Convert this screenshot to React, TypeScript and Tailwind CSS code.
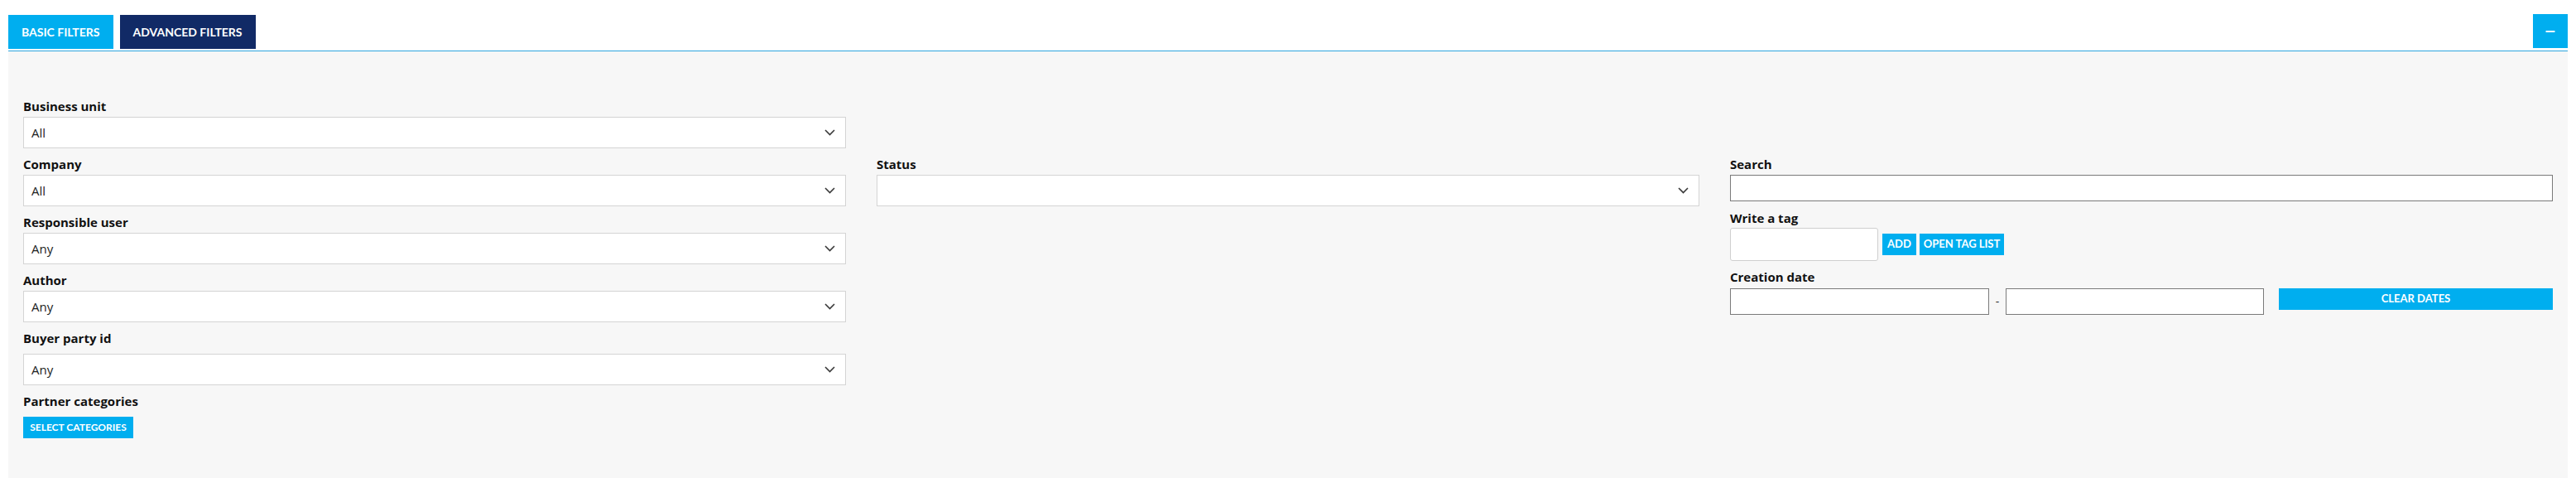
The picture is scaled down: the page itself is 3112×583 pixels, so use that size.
import { Minus } from "lucide-react"

const label = "block h-[20px] leading-[20px] text-[15px] font-bold text-[#111] font-['Open_Sans',sans-serif]"
const btn = "bg-[#00aeef] text-white font-bold uppercase font-['Lato',sans-serif] flex items-center justify-center"

function Chevron() {
  return (
    <svg width="13" height="8" viewBox="0 0 13 8" fill="none">
      <polyline points="1,1 6.5,6.5 12,1" stroke="#3a3a3a" strokeWidth="1.6" />
    </svg>
  )
}

function SelectBox({ value }: { value?: string }) {
  return (
    <div className="h-[38px] bg-white border border-[#d4d4d4] flex items-center justify-between pl-[9px] pr-[12px]">
      <span className="text-[15px] text-[#222] font-['Open_Sans',sans-serif]">{value}</span>
      <Chevron />
    </div>
  )
}

function Field({ name, value, extra }: { name: string; value?: string; extra?: boolean }) {
  return (
    <div className="mb-[9px]">
      <span className={`${label} ${extra ? "mb-[9px]" : "mb-[3px]"}`}>{name}</span>
      <SelectBox value={value} />
    </div>
  )
}

export default function App() {
  return (
    <div className="w-[3112px] h-[583px] bg-white">
      <div className="flex items-end justify-between px-[10px] pt-[17px]">
        <div className="flex gap-[8px]">
          <button className={`${btn} h-[41px] px-[16px] text-[14px]`}>Basic filters</button>
          <button className="h-[41px] px-[16px] text-[14px] bg-[#112a66] text-white font-bold uppercase font-['Lato',sans-serif]">Advanced filters</button>
        </div>
        <button className="w-[42px] h-[41px] mb-[1px] bg-[#00aeef] flex items-center justify-center text-white">
          <Minus size={16} strokeWidth={3} />
        </button>
      </div>
      <div className="mx-[10px] mt-[2px] border-t border-[#2ea6df] bg-[#f7f7f7] h-[516px] px-[18px] pt-[56px] grid grid-cols-3 gap-x-[37px] items-start">
        <div>
          <Field name="Business unit" value="All" />
          <Field name="Company" value="All" />
          <Field name="Responsible user" value="Any" />
          <Field name="Author" value="Any" />
          <Field name="Buyer party id" value="Any" extra />
          <span className={`${label} mb-[9px]`}>Partner categories</span>
          <button className={`${btn} w-[133px] h-[26px] text-[12px]`}>Select categories</button>
        </div>
        <div className="pt-[70px]">
          <Field name="Status" />
        </div>
        <div className="pt-[70px] font-['Open_Sans',sans-serif]">
          <span className={`${label} mb-[3px]`}>Search</span>
          <input className="block w-full h-[32px] bg-white border border-[#7a7a7a] outline-none" />
          <span className={`${label} mt-[10px] mb-[2px]`}>Write a tag</span>
          <div className="flex items-center">
            <input className="w-[179px] h-[40px] bg-white border border-[#cfcfcf] rounded-[3px] outline-none" />
            <button className={`${btn} ml-[5px] w-[41px] h-[26px] text-[13px]`}>Add</button>
            <button className={`${btn} ml-[4px] w-[102px] h-[26px] text-[13px]`}>Open tag list</button>
          </div>
          <span className={`${label} mt-[9px] mb-[4px]`}>Creation date</span>
          <div className="flex items-start">
            <input className="w-[313px] h-[32px] bg-white border border-[#7a7a7a] outline-none" />
            <span className="w-[20px] h-[32px] leading-[32px] text-center text-[14px] text-[#333]">-</span>
            <input className="w-[312px] h-[32px] bg-white border border-[#7a7a7a] outline-none" />
            <button className={`${btn} ml-[18px] flex-1 h-[26px] text-[13px]`}>Clear dates</button>
          </div>
        </div>
      </div>
    </div>
  )
}
